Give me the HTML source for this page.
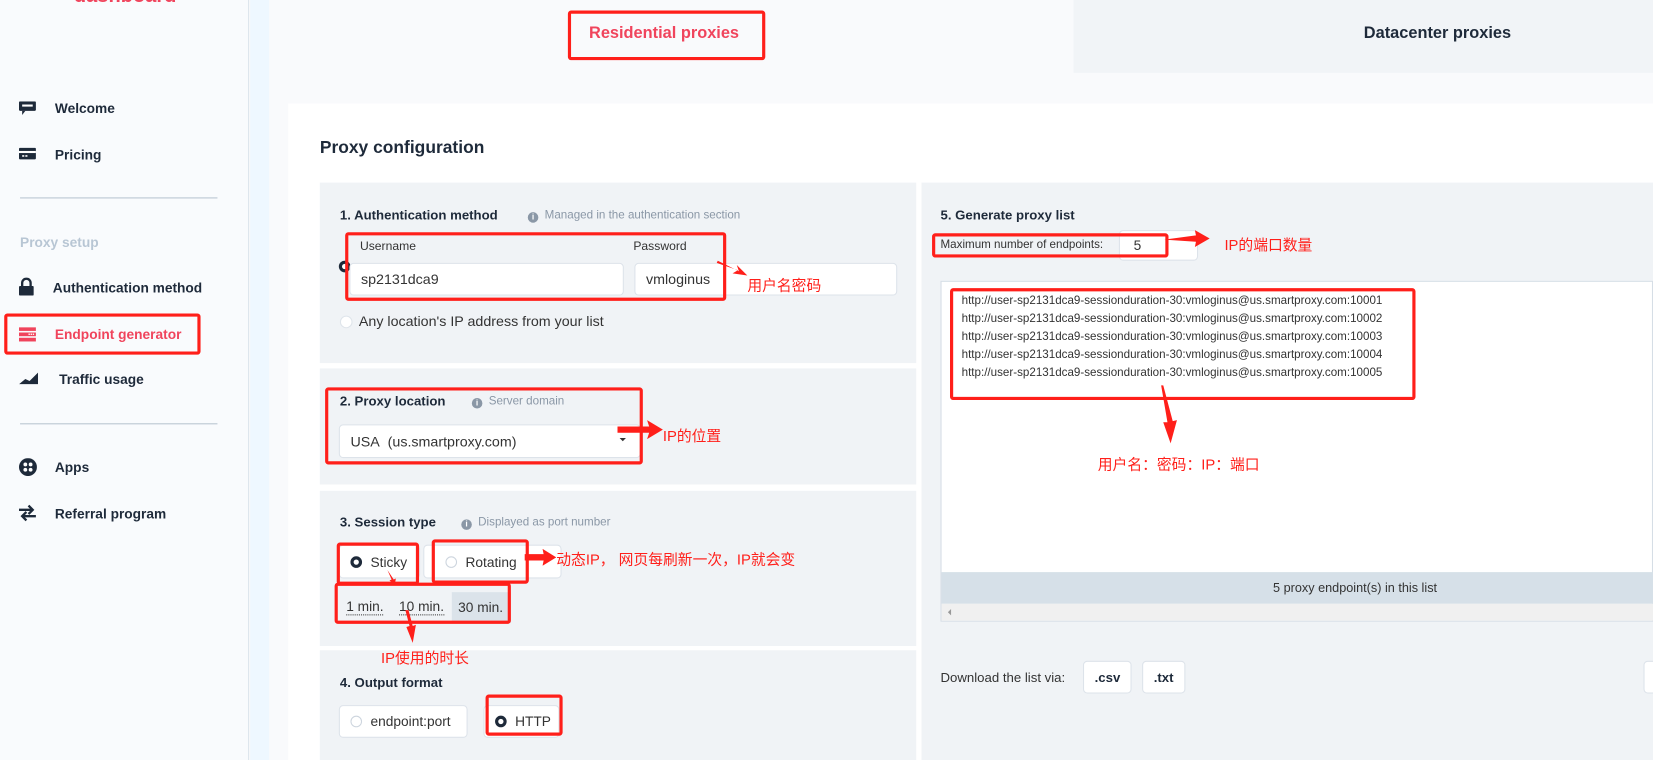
<!DOCTYPE html>
<html><head><meta charset="utf-8"><style>
*{margin:0;padding:0;box-sizing:border-box}
html,body{width:1653px;height:760px;overflow:hidden;background:#f9fafc}
body{font-family:"Liberation Sans","Noto Sans CJK SC",sans-serif;color:#1e2a3a}
#w{position:absolute;left:0;top:0;width:1566px;height:720px;transform:scale(1.05556);transform-origin:0 0}
.a{position:absolute;white-space:nowrap}
.rb{position:absolute;border:3px solid #ff1f1a;border-radius:3px}
.rt{position:absolute;color:#ff1f1a;font-size:14px;white-space:nowrap;font-family:"Liberation Sans","Noto Sans CJK SC",sans-serif}
.nav{position:absolute;font-size:13px;font-weight:bold;color:#1e2a3a}
.sec{position:absolute;background:#f0f3f6}
.h{position:absolute;font-size:12.5px;font-weight:bold;color:#1e2a3a;white-space:nowrap}
.note{position:absolute;font-size:11px;color:#8a97a6;white-space:nowrap}
.inf{display:inline-block;width:10px;height:10px;border-radius:50%;background:#8a97a6;color:#fff;font-size:8px;text-align:center;line-height:10px;font-weight:bold;margin-right:6px;vertical-align:-1px}
.inp{position:absolute;background:#fff;border:1px solid #dde3ea;border-radius:4px;font-size:13.5px;color:#333;padding-left:10px;display:flex;align-items:center}
.btn{position:absolute;background:#fff;border:1px solid #dde3ea;border-radius:4px;font-size:13px;color:#333;display:flex;align-items:center;padding-left:10px}
.ro{display:inline-block;width:11px;height:11px;border-radius:50%;border:1px solid #cdd5de;background:#fff;margin-right:8px}
.rf{display:inline-block;width:11px;height:11px;border-radius:50%;border:3px solid #1e2a3a;background:#fff;margin-right:8px}
.ln{position:absolute;left:911px;font-size:11px;color:#333}
</style></head><body><div id="w">
<!-- sidebar -->
<div class="a" style="left:0;top:0;width:236px;height:720px;background:#f9fbfd;border-right:1px solid #dde4ec"></div>
<div class="a" style="left:237px;top:0;width:18px;height:720px;background:#eef8ff"></div>
<div class="a" style="left:70px;top:-13px;font-size:19px;font-weight:bold;color:#f0445c;line-height:20px">dashboard</div>

<svg class="a" style="left:18px;top:96px" width="17" height="14" viewBox="0 0 17 14"><rect x="0" y="0" width="16" height="9" rx="1" fill="#1e2a3a"/><rect x="3" y="3" width="10" height="2" fill="#fff"/><path d="M3 9v4l3-4z" fill="#1e2a3a"/></svg>
<div class="nav" style="left:52px;top:95px">Welcome</div>
<svg class="a" style="left:18px;top:140px" width="17" height="12"><rect x="0" y="0" width="16" height="11" rx="1" fill="#1e2a3a"/><rect x="0" y="3" width="16" height="2" fill="#fff"/><rect x="3" y="7" width="2" height="1.5" fill="#fff"/><rect x="6" y="7" width="2" height="1.5" fill="#fff"/></svg>
<div class="nav" style="left:52px;top:139px">Pricing</div>
<div class="a" style="left:19px;top:187px;width:187px;height:1px;background:#b8c4d0"></div>
<div class="nav" style="left:19px;top:222px;color:#b8c6d4">Proxy setup</div>
<svg class="a" style="left:18px;top:263px" width="14" height="17"><path d="M3 8V5a4 4 0 0 1 8 0v3" stroke="#1e2a3a" stroke-width="2.2" fill="none"/><rect x="0" y="8" width="14" height="9" rx="1" fill="#1e2a3a"/></svg>
<div class="nav" style="left:50px;top:265px">Authentication method</div>
<svg class="a" style="left:18px;top:310px" width="17" height="14"><rect x="0" y="0" width="16" height="3.5" fill="#f0445c"/><rect x="0" y="5" width="16" height="3.5" fill="#f0445c"/><rect x="0" y="10" width="16" height="3.5" fill="#f0445c"/><rect x="9" y="6" width="1.3" height="1.3" fill="#fff"/><rect x="11" y="6" width="1.3" height="1.3" fill="#fff"/><rect x="13" y="6" width="1.3" height="1.3" fill="#fff"/></svg>
<div class="nav" style="left:52px;top:309px;color:#f0445c">Endpoint generator</div>
<div class="rb" style="left:4px;top:297px;width:186px;height:39px"></div>
<svg class="a" style="left:18px;top:352px" width="19" height="12"><path d="M0 12L6 7l4 2 8-8v11z" fill="#1e2a3a"/></svg>
<div class="nav" style="left:56px;top:352px">Traffic usage</div>
<div class="a" style="left:19px;top:401px;width:187px;height:1px;background:#b8c4d0"></div>
<svg class="a" style="left:18px;top:434px" width="17" height="17"><circle cx="8.5" cy="8.5" r="8.5" fill="#1e2a3a"/><circle cx="6" cy="6" r="1.8" fill="#fff"/><circle cx="11" cy="6" r="1.8" fill="#fff"/><circle cx="6" cy="11" r="1.8" fill="#fff"/><circle cx="11" cy="11" r="1.8" fill="#fff"/></svg>
<div class="nav" style="left:52px;top:435px">Apps</div>
<svg class="a" style="left:18px;top:478px" width="17" height="16"><path d="M0 5h12M9 1l4 4-4 4M16 11H4M7 7l-4 4 4 4" stroke="#1e2a3a" stroke-width="2.2" fill="none"/></svg>
<div class="nav" style="left:52px;top:479px">Referral program</div>

<!-- tabs -->
<div class="a" style="left:1017px;top:0;width:549px;height:69px;background:#f1f4f7"></div>
<div class="a" style="left:558px;top:23px;font-size:15.5px;font-weight:bold;color:#f0445c">Residential proxies</div>
<div class="rb" style="left:538px;top:10px;width:187px;height:47px"></div>
<div class="a" style="left:1292px;top:23px;font-size:15.5px;font-weight:bold;color:#1e2a3a">Datacenter proxies</div>

<!-- card -->
<div class="a" style="left:273px;top:98px;width:1293px;height:622px;background:#fff"></div>
<div class="a" style="left:303px;top:131px;font-size:16.5px;font-weight:bold">Proxy configuration</div>

<div class="sec" style="left:303px;top:173px;width:565px;height:171px"></div>
<div class="sec" style="left:303px;top:349px;width:565px;height:110px"></div>
<div class="sec" style="left:303px;top:465px;width:565px;height:147px"></div>
<div class="sec" style="left:303px;top:616px;width:565px;height:104px"></div>
<div class="sec" style="left:873px;top:173px;width:693px;height:547px"></div>

<!-- sec1 -->
<div class="h" style="left:322px;top:197px">1. Authentication method</div>
<div class="note" style="left:500px;top:198px"><span class="inf">i</span>Managed in the authentication section</div>
<div class="a" style="left:341px;top:228px;font-size:11.5px;color:#333">Username</div>
<div class="a" style="left:600px;top:228px;font-size:11.5px;color:#333">Password</div>
<div class="a" style="left:321px;top:247px;width:11px;height:11px;border-radius:50%;border:3px solid #1e2a3a;background:#fff"></div>
<div class="inp" style="left:331px;top:249px;width:260px;height:31px">sp2131dca9</div>
<div class="inp" style="left:601px;top:249px;width:249px;height:31px">vmloginus</div>
<div class="rb" style="left:327px;top:220px;width:361px;height:65px"></div>
<div class="a" style="left:322px;top:299px;width:12px;height:12px;border-radius:50%;border:1px solid #dfe5eb;background:#fff"></div>
<div class="a" style="left:340px;top:297px;font-size:13.5px;color:#333">Any location's IP address from your list</div>
<svg class="a" style="left:678px;top:244px" width="32" height="22"><path d="M2 3l20 10-2 -6 10 10-14-2 5-3L1 5z" fill="#ff1f1a"/></svg>
<div class="rt" style="left:708px;top:260px">用户名密码</div>

<!-- sec2 -->
<div class="h" style="left:322px;top:373px">2. Proxy location</div>
<div class="note" style="left:447px;top:374px"><span class="inf">i</span>Server domain</div>
<div class="inp" style="left:321px;top:402px;width:286px;height:32px">USA&nbsp; (us.smartproxy.com)</div>
<div class="a" style="left:587px;top:415px;border-left:3px solid transparent;border-right:3px solid transparent;border-top:3px solid #333"></div>
<div class="rb" style="left:308px;top:367px;width:301px;height:73px"></div>
<svg class="a" style="left:585px;top:398px" width="45" height="18"><path d="M0 6h30l-2-6 15 9-15 9 2-6H0z" fill="#ff1f1a"/></svg>
<div class="rt" style="left:628px;top:403px">IP的位置</div>

<!-- sec3 -->
<div class="h" style="left:322px;top:488px">3. Session type</div>
<div class="note" style="left:437px;top:489px"><span class="inf">i</span>Displayed as port number</div>
<div class="btn" style="left:321px;top:516px;width:77px;height:32px"><span class="rf"></span>Sticky</div>
<div class="btn" style="left:401px;top:516px;width:131px;height:32px;padding-left:20px"><span class="ro"></span>Rotating</div>
<div class="rb" style="left:319px;top:514px;width:78px;height:40px"></div>
<div class="rb" style="left:409px;top:511px;width:92px;height:42px"></div>
<svg class="a" style="left:497px;top:520px" width="30" height="16"><path d="M0 5h18l-1-5 13 8-13 8 1-5H0z" fill="#ff1f1a"/></svg>
<div class="rt" style="left:527px;top:520px">动态IP， 网页每刷新一次，IP就会变</div>
<div class="a" style="left:328px;top:568px;font-size:13px;color:#333;border-bottom:1px dotted #333;line-height:14px">1 min.</div>
<div class="a" style="left:378px;top:568px;font-size:13px;color:#333;border-bottom:1px dotted #333;line-height:14px">10 min.</div>
<div class="a" style="left:428px;top:561px;width:56px;height:29px;background:#dbe3ea;font-size:13px;color:#333;line-height:29px;padding-left:6px">30 min.</div>
<div class="rb" style="left:317px;top:552px;width:167px;height:39px"></div>
<svg class="a" style="left:365px;top:540px" width="40" height="72"><path d="M2 0l6 9 2-1-1 6-5-4 2-1z" fill="#ff1f1a"/><path d="M22 38l4 15 3-1-3 17-6-15 3-1-4-15z" fill="#ff1f1a"/></svg>
<div class="rt" style="left:361px;top:613px">IP使用的时长</div>

<!-- sec4 -->
<div class="h" style="left:322px;top:640px">4. Output format</div>
<div class="btn" style="left:321px;top:668px;width:122px;height:31px"><span class="ro"></span>endpoint:port</div>
<div class="btn" style="left:458px;top:668px;width:72px;height:31px;padding-left:10px"><span class="rf"></span>HTTP</div>
<div class="rb" style="left:460px;top:658px;width:73px;height:39px"></div>

<!-- right -->
<div class="h" style="left:891px;top:197px">5. Generate proxy list</div>
<div class="a" style="left:891px;top:226px;font-size:11px;color:#333">Maximum number of endpoints:</div>
<div class="inp" style="left:1060px;top:218px;width:75px;height:29px;font-size:13px;padding-left:13px">5</div>
<div class="rb" style="left:883px;top:221px;width:224px;height:23px"></div>
<svg class="a" style="left:1103px;top:218px" width="45" height="18"><path d="M0 9l30-4-1-5 14 8-14 8 1-5z" fill="#ff1f1a"/></svg>
<div class="rt" style="left:1160px;top:222px">IP的端口数量</div>

<div class="a" style="left:891px;top:266px;width:675px;height:323px;background:#fff;border:1px solid #d6dee6"></div>
<div class="ln" style="top:279px">http://user-sp2131dca9-sessionduration-30:vmloginus@us.smartproxy.com:10001</div>
<div class="ln" style="top:296px">http://user-sp2131dca9-sessionduration-30:vmloginus@us.smartproxy.com:10002</div>
<div class="ln" style="top:313px">http://user-sp2131dca9-sessionduration-30:vmloginus@us.smartproxy.com:10003</div>
<div class="ln" style="top:330px">http://user-sp2131dca9-sessionduration-30:vmloginus@us.smartproxy.com:10004</div>
<div class="ln" style="top:347px">http://user-sp2131dca9-sessionduration-30:vmloginus@us.smartproxy.com:10005</div>
<div class="rb" style="left:900px;top:273px;width:441px;height:106px"></div>
<svg class="a" style="left:1096px;top:365px" width="26" height="56"><path d="M4 0l6 35-4 0 7 20 6-22-4 1-9-34z" fill="#ff1f1a"/></svg>
<div class="rt" style="left:1040px;top:430px">用户名：密码：IP：端口</div>
<div class="a" style="left:892px;top:542px;width:674px;height:30px;background:#d6e0e8;font-size:12px;color:#333;text-align:center;line-height:30px;padding-right:96px"><span style="position:absolute;left:314px">5 proxy endpoint(s) in this list</span></div>
<div class="a" style="left:892px;top:572px;width:674px;height:16px;background:#f0f0f0"></div>
<div class="a" style="left:898px;top:577px;border-top:3px solid transparent;border-bottom:3px solid transparent;border-right:3px solid #999"></div>

<div class="a" style="left:891px;top:635px;font-size:12.5px;color:#333">Download the list via:</div>
<div class="btn" style="left:1026px;top:626px;width:46px;height:31px;font-weight:bold;font-size:12.5px;color:#1e2a3a">.csv</div>
<div class="btn" style="left:1082px;top:626px;width:41px;height:31px;font-weight:bold;font-size:12.5px;color:#1e2a3a">.txt</div>
<div class="btn" style="left:1557px;top:626px;width:20px;height:31px"></div>
</div></body></html>
